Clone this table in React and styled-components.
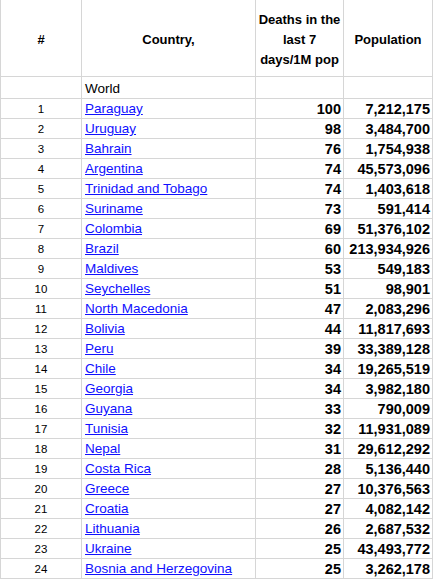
import React from 'react';
import styled, { createGlobalStyle } from 'styled-components';

const GlobalStyle = createGlobalStyle`
  body {
    margin: 0;
    background: #fff;
    font-family: "Liberation Sans", Arial, sans-serif;
    color: #000;
  }
`;

const Sheet = styled.table`
  border-collapse: collapse;
  table-layout: fixed;
  width: 433px;
`;

const Col = styled.col`
  width: ${p => p.$w}px;
`;

const HeadCell = styled.th`
  height: 72px;
  padding: 4px 2px 0;
  border: 1px solid #d6d6d6;
  border-top: none;
  font-size: 13px;
  font-weight: bold;
  text-align: center;
  vertical-align: middle;
  line-height: 20px;
  white-space: nowrap;
`;

const Row = styled.tr`
  height: ${p => p.$h || 20}px;
`;

const Cell = styled.td`
  padding: 0 2px 0 ${p => (p.$align === 'left' ? 3 : 2)}px;
  border: 1px solid #d6d6d6;
  text-align: ${p => p.$align || 'left'};
  font-weight: ${p => (p.$bold ? 'bold' : 'normal')};
  font-size: ${p => p.$size || 13.5}px;
  white-space: nowrap;
  overflow: hidden;
  line-height: 18px;
  vertical-align: bottom;
`;

const CountryLink = styled.a`
  color: #1010ff;
  text-decoration: underline;
`;

const rows = [
  ['Paraguay', 100, '7,212,175'],
  ['Uruguay', 98, '3,484,700'],
  ['Bahrain', 76, '1,754,938'],
  ['Argentina', 74, '45,573,096'],
  ['Trinidad and Tobago', 74, '1,403,618'],
  ['Suriname', 73, '591,414'],
  ['Colombia', 69, '51,376,102'],
  ['Brazil', 60, '213,934,926'],
  ['Maldives', 53, '549,183'],
  ['Seychelles', 51, '98,901'],
  ['North Macedonia', 47, '2,083,296'],
  ['Bolivia', 44, '11,817,693'],
  ['Peru', 39, '33,389,128'],
  ['Chile', 34, '19,265,519'],
  ['Georgia', 34, '3,982,180'],
  ['Guyana', 33, '790,009'],
  ['Tunisia', 32, '11,931,089'],
  ['Nepal', 31, '29,612,292'],
  ['Costa Rica', 28, '5,136,440'],
  ['Greece', 27, '10,376,563'],
  ['Croatia', 27, '4,082,142'],
  ['Lithuania', 26, '2,687,532'],
  ['Ukraine', 25, '43,493,772'],
  ['Bosnia and Herzegovina', 25, '3,262,178'],
];

export default function App() {
  return (
    <>
      <GlobalStyle />
      <Sheet>
        <colgroup>
          <Col $w={81} />
          <Col $w={174} />
          <Col $w={88} />
          <Col $w={89} />
        </colgroup>
        <thead>
          <tr>
            <HeadCell>#</HeadCell>
            <HeadCell>Country,</HeadCell>
            <HeadCell>
              Deaths in the
              <br />
              last 7
              <br />
              days/1M pop
            </HeadCell>
            <HeadCell>Population</HeadCell>
          </tr>
        </thead>
        <tbody>
          <Row $h={22}>
            <Cell />
            <Cell $align="left">World</Cell>
            <Cell />
            <Cell />
          </Row>
          {rows.map(([country, deaths, pop], i) => (
            <Row key={country}>
              <Cell $align="center" $size={11.5}>{i + 1}</Cell>
              <Cell $align="left">
                <CountryLink href="#">{country}</CountryLink>
              </Cell>
              <Cell $align="right" $bold $size={14.5}>{deaths}</Cell>
              <Cell $align="right" $bold $size={14.5}>{pop}</Cell>
            </Row>
          ))}
        </tbody>
      </Sheet>
    </>
  );
}
